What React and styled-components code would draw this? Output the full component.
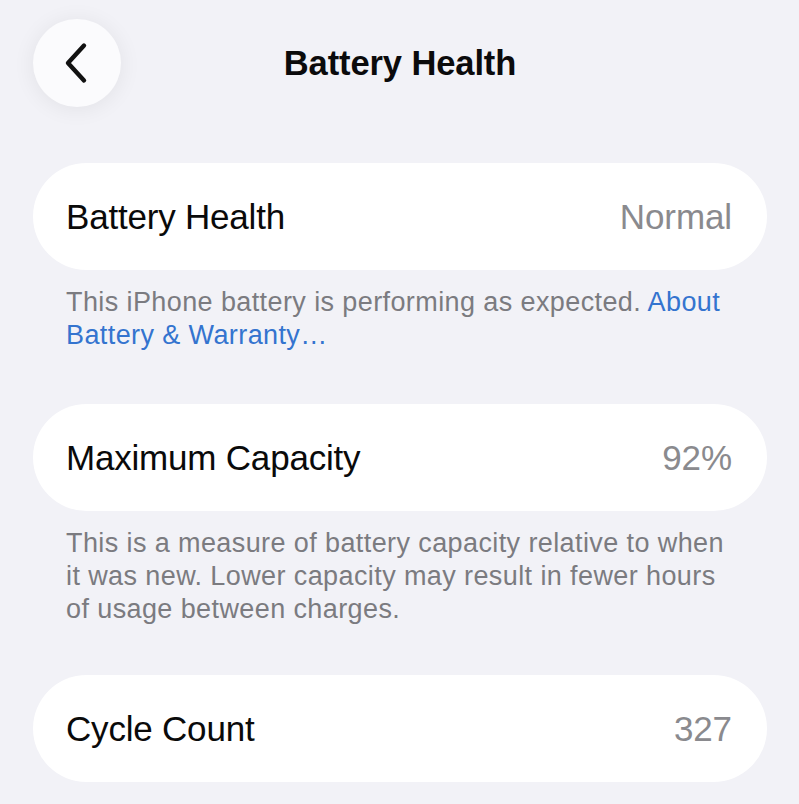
import React from "react";
import styled, { createGlobalStyle } from "styled-components";

const GlobalStyle = createGlobalStyle`
  html, body {
    margin: 0;
    padding: 0;
    background: #f2f2f7;
  }
  body {
    font-family: "Liberation Sans", Arial, "Helvetica Neue", sans-serif;
    -webkit-font-smoothing: antialiased;
  }
`;

const Screen = styled.div`
  width: 799px;
  min-height: 804px;
  box-sizing: border-box;
  padding: 19px 32px 0 33px;
  background: #f2f2f7;
  overflow: hidden;
`;

const NavBar = styled.header`
  display: grid;
  grid-template-columns: 88px 1fr 88px;
  align-items: center;
  height: 88px;
`;

const BackButton = styled.button`
  width: 88px;
  height: 88px;
  border-radius: 50%;
  border: none;
  padding: 0;
  background: #fbfbfd;
  box-shadow: 0 2px 22px rgba(0, 0, 0, 0.07);
  display: flex;
  align-items: center;
  justify-content: center;
  cursor: pointer;
`;

const Title = styled.h1`
  margin: 0;
  text-align: center;
  font-size: 34.5px;
  font-weight: 700;
  color: #0b0b0c;
  letter-spacing: -0.1px;
`;

const Content = styled.main`
  margin-top: 56px;
  display: flex;
  flex-direction: column;
`;

const Section = styled.section`
  display: flex;
  flex-direction: column;
  margin-bottom: ${(p) => p.$spacing}px;
`;

const Row = styled.div`
  height: 107px;
  border-radius: 54px;
  background: #ffffff;
  display: flex;
  align-items: center;
  justify-content: space-between;
  padding: 0 35px 0 33px;
  box-sizing: border-box;
`;

const Label = styled.span`
  font-size: 35px;
  color: #0a0a0a;
  letter-spacing: -0.2px;
`;

const Value = styled.span`
  font-size: 35px;
  color: #8a8a8e;
  letter-spacing: -0.1px;
`;

const Footnote = styled.p`
  margin: 16px 0 0;
  padding: 0 33px;
  font-size: 27px;
  line-height: 33px;
  color: #7b7b80;
  letter-spacing: 0.4px;
`;

const Link = styled.a`
  color: #3474cf;
  text-decoration: none;
`;

function ChevronLeft() {
  return (
    <svg width="28" height="42" viewBox="0 0 28 42" fill="none">
      <path
        d="M21 3.5 L5 21 L21 38.5"
        stroke="#111"
        strokeWidth="4.4"
        strokeLinecap="round"
        strokeLinejoin="round"
      />
    </svg>
  );
}

export default function App() {
  return (
    <>
      <GlobalStyle />
      <Screen>
        <NavBar>
          <BackButton aria-label="Back">
            <ChevronLeft />
          </BackButton>
          <Title>Battery Health</Title>
          <span />
        </NavBar>
        <Content>
          <Section $spacing={52}>
            <Row>
              <Label>Battery Health</Label>
              <Value>Normal</Value>
            </Row>
            <Footnote>
              This iPhone battery is performing as expected.{" "}
              <Link href="#">About Battery &amp; Warranty…</Link>
            </Footnote>
          </Section>
          <Section $spacing={49}>
            <Row>
              <Label>Maximum Capacity</Label>
              <Value>92%</Value>
            </Row>
            <Footnote>
              This is a measure of battery capacity relative to when it was
              new. Lower capacity may result in fewer hours of usage between
              charges.
            </Footnote>
          </Section>
          <Section $spacing={0}>
            <Row>
              <Label>Cycle Count</Label>
              <Value>327</Value>
            </Row>
          </Section>
        </Content>
      </Screen>
    </>
  );
}
